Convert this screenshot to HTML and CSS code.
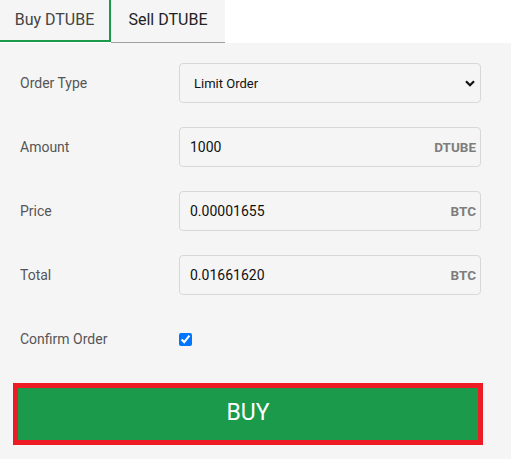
FILE: index.html
```html
<!DOCTYPE html>
<html>
<head>
<meta charset="utf-8">
<link rel="stylesheet" href="styles.css">
</head>
<body>
<div class="tabs">
  <div class="tab tab-active">Buy DTUBE</div>
  <div class="tab tab-sell">Sell DTUBE</div>
</div>
<div class="panel">
  <div class="form">
    <label class="label">Order Type</label>
    <div class="field select-wrap">
      <select class="select"><option>Limit Order</option></select>
      <svg class="chevron" width="10" height="7" viewBox="0 0 10 7"><path d="M1 1.2 L5 5.2 L9 1.2" fill="none" stroke="#111" stroke-width="2.2"/></svg>
    </div>

    <label class="label">Amount</label>
    <div class="field input-box"><span class="value">1000</span><span class="suffix">DTUBE</span></div>

    <label class="label">Price</label>
    <div class="field input-box"><span class="value">0.00001655</span><span class="suffix">BTC</span></div>

    <label class="label">Total</label>
    <div class="field input-box"><span class="value">0.01661620</span><span class="suffix">BTC</span></div>

    <label class="label">Confirm Order</label>
    <div class="field check-field"><input class="check" type="checkbox" checked></div>
  </div>
  <button class="buy">BUY</button>
</div>
</body>
</html>
```
FILE: styles.css
```css
html, body {
  margin: 0;
  padding: 0;
  background: #fff;
  font-family: Roboto, "Noto Sans", sans-serif;
}
.tabs {
  display: flex;
  align-items: flex-start;
  height: 43px;
  background: #fff;
}
.tab {
  box-sizing: border-box;
  display: flex;
  align-items: center;
  justify-content: center;
  font-size: 16px;
  background: #f5f5f5;
}
.tab-active {
  width: 111px;
  height: 42px;
  padding-bottom: 2px;
  color: #444;
  border-right: 2px solid #1b9a4c;
  border-bottom: 2px solid #1b9a4c;
}
.tab-sell {
  width: 114px;
  height: 43px;
  padding-bottom: 4px;
  color: #222;
  border-bottom: 1px solid #a0a0a0;
}
.panel {
  background: #f5f5f5;
  padding: 20px 0 14px 0;
}
.form {
  display: grid;
  grid-template-columns: 159px 302px;
  grid-auto-rows: 40px;
  row-gap: 24px;
  padding-left: 20px;
}
.label {
  display: flex;
  align-items: center;
  font-size: 14px;
  color: #555;
}
.field {
  box-sizing: border-box;
  height: 40px;
}
.select-wrap {
  position: relative;
}
.select {
  -webkit-appearance: none;
  appearance: none;
  box-sizing: border-box;
  width: 100%;
  height: 40px;
  margin: 0;
  padding: 0 0 0 14px;
  border: 1px solid #d8d8d8;
  border-radius: 4px;
  background: #f5f5f5;
  font-family: Roboto, "Noto Sans", sans-serif;
  font-size: 13px;
  color: #111;
  outline: none;
}
.chevron {
  position: absolute;
  right: 6px;
  top: 17px;
}
.input-box {
  display: flex;
  align-items: center;
  justify-content: space-between;
  border: 1px solid #d8d8d8;
  border-radius: 4px;
  padding: 0 4px 0 10px;
  background: #f5f5f5;
}
.value {
  font-size: 14px;
  color: #111;
}
.suffix {
  font-size: 13.5px;
  font-weight: bold;
  color: #7d7d7d;
}
.check-field {
  display: flex;
  align-items: center;
}
.check {
  width: 13px;
  height: 13px;
  margin: 0;
}
.buy {
  display: block;
  box-sizing: border-box;
  width: 470px;
  height: 62px;
  margin: 24px 0 0 13px;
  border: 5px solid #ed1c24;
  background: #1b9a4c;
  color: #fff;
  font-family: Roboto, "Noto Sans", sans-serif;
  font-size: 23px;
  padding: 0 0 4px 0;
}
```
